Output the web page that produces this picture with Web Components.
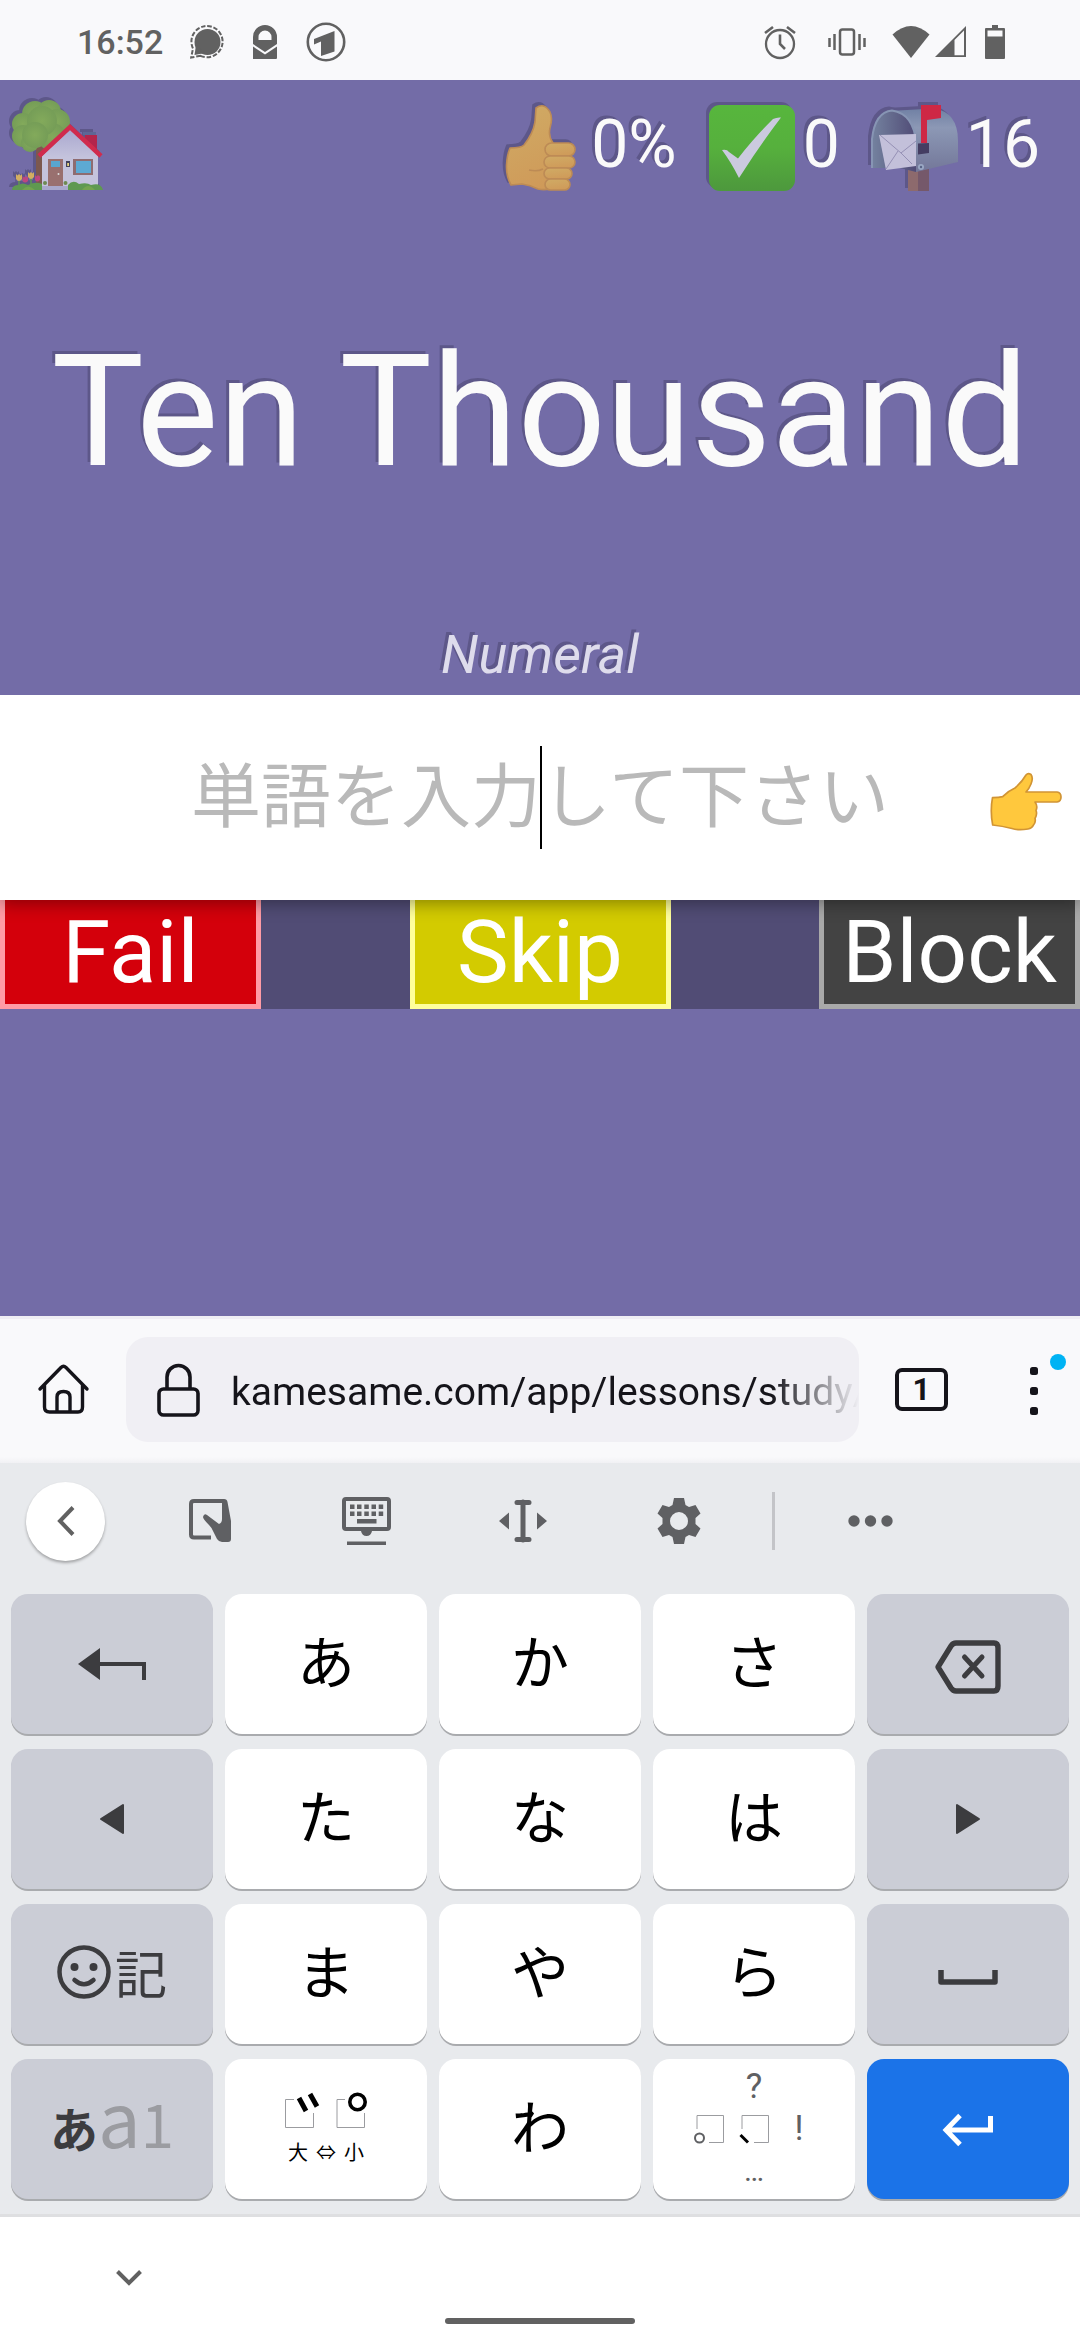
<!DOCTYPE html>
<html lang="en">
<head>
<meta charset="utf-8">
<meta name="viewport" content="width=device-width, initial-scale=1">
<title>KameSame</title>
<style>
  html, body { margin: 0; }
  body {
    min-height: 100vh;
    display: flex;
    flex-direction: column;
    background: #736ca7;
    font-family: Roboto, "Noto Sans CJK JP", sans-serif;
  }
  study-page { flex: 1; }
</style>
</head>
<body>
<status-bar></status-bar>
<study-page>
  <study-header></study-header>
  <study-prompt>Ten Thousand<span slot="kind">Numeral</span></study-prompt>
  <answer-form></answer-form>
  <answer-actions></answer-actions>
</study-page>
<browser-bar></browser-bar>
<kana-keyboard></kana-keyboard>
<nav-bar></nav-bar>

<script>
const define = (tag, html) => {
  const template = document.createElement('template');
  template.innerHTML = html;
  customElements.define(tag, class extends HTMLElement {
    constructor() {
      super();
      this.attachShadow({ mode: 'open' }).append(template.content.cloneNode(true));
    }
  });
};

// name: [width, height, markup]
const ICONS = {
  bubble: [34, 34, '<circle cx="17.500" cy="17" r="13" fill="#616161"/><path d="M6 20 4.500 30 15 28Z" fill="#616161"/><path d="M10.500 30.800A15.600 15.600 0 1 0 3 23.500L1.200 32.500Z" fill="none" stroke="#616161" stroke-width="2" stroke-dasharray="4.500 1.800"/>'],
  mailLock: [28, 34, '<path fill="#616161" fill-rule="evenodd" d="M2 34V21.500L14 29.500 26 21.500V33Q26 34 25 34ZM2 19V12A12 12 0 0 1 26 12V19L14 27ZM7.500 15H20.500V12A6.500 6.500 0 0 0 7.500 12Z"/>'],
  broadcast: [40, 40, '<circle cx="20" cy="20" r="18.200" fill="none" stroke="#616161" stroke-width="2.600"/><path fill="#616161" d="M8 17 28.500 9V29.500L15 34V19.500L8 22.500Z"/>'],
  alarm: [32, 34, '<g fill="none" stroke="#616161" stroke-width="2.300"><circle cx="16" cy="19" r="14"/><path d="M16 9.500V19L21 24M1 8 9 2M23 2 31 8" stroke-width="2.600"/></g>'],
  vibrate: [38, 28, '<g fill="none" stroke="#616161" stroke-width="2.500"><rect x="12" y="1.500" width="14" height="25" rx="2.500"/><path d="M1.500 10V19M6.500 6V22M31.500 6V22M36.500 10V19"/></g>'],
  wifi: [38, 34, '<path fill="#616161" d="M.500 9.500Q19-7.500 37.500 9.500L19 33Z"/>'],
  cell: [31, 34, '<path fill="#616161" fill-rule="evenodd" d="M0 32 31 1V32ZM19.500 30.200H29V5.500L19.500 15Z"/>'],
  battery: [20, 34, '<path fill="#616161" fill-rule="evenodd" d="M1 3H7V0H13V3H19Q20 3 20 4V33Q20 34 19 34H1Q0 34 0 33V4Q0 3 1 3ZM2.500 5.500V11.500H17.500V5.500Z"/>'],
  house: [92, 92, `<defs><radialGradient id="leaf"><stop offset="0" stop-color="#83aa5b"/><stop offset="1" stop-color="#759d57"/></radialGradient><linearGradient id="wall" x2="0" y2="1"><stop offset="0" stop-color="#a9a7cf"/><stop offset=".5" stop-color="#c4c3dc"/></linearGradient></defs>
    <path d="M25 44H36V87H25Z" fill="#7c584f"/>
    <g fill="url(#leaf)"><circle cx="24" cy="15" r="13"/><circle cx="38" cy="13" r="12"/><circle cx="46" cy="23" r="13"/><circle cx="12" cy="25" r="11"/><circle cx="12" cy="37" r="11"/><circle cx="19" cy="44" r="9"/><circle cx="41" cy="38" r="14"/><circle cx="31" cy="22" r="15"/><circle cx="24" cy="36" r="13"/></g>
    <path d="M74 36H86V55L74 45Z" fill="#b3254c"/><path d="M72 33H85V36H72Z" fill="#5e6695"/>
    <path d="M31 57 59 30 87 56V87H31Z" fill="url(#wall)"/><path d="M28 57 59 28 90 57" fill="none" stroke="#d02b4d" stroke-width="4.500"/>
    <path d="M37 60H52V87H37Z" fill="#99706f"/><path d="M40 62H49V68H40Z" fill="#59a6d0"/><circle cx="47.500" cy="75" r="1" fill="#ddd"/>
    <path d="M62 60H82V76H62Z" fill="#8f6c70"/><path d="M65 62H80V74H65Z" fill="#5da9d3"/>
    <path d="M55 62H59V68H55Z" fill="#43415a"/><path d="M56.200 64H58V67H56.200Z" fill="#e7d37e"/>
    <path d="M30 87H59V91H30Z" fill="#a9a8cc"/>
    <g fill="#5f9950"><path d="M1 91Q1 86 8 86 11 83 17 86 25 82 31 85V91Z"/><path d="M57 91V86Q62 80 68 85 76 83 80 86 90 83 92 91Z"/></g><path d="M11 91Q17 84 24 91ZM71 91Q77 83 84 91Z" fill="#74a44f"/>
    <path d="M8 80V87M20 78V86" stroke="#5f9950" stroke-width="1.500"/><g fill="#d3ae61"><path d="M5 75 6.500 76.500 8 75 9.500 76.500 11 75V80Q8 84 5 80Z"/><path d="M17 73 18.500 74.500 20 73 21.500 74.500 23 73V78Q20 82 17 78Z"/></g><g fill="#bd477f"><path d="M11.500 77 13 78.500 14.500 77 16 78.500 17 77V82Q14 85 11.500 82Z"/><path d="M24 76 25.500 77.500 27 76 28.500 77.500 29 76V81Q26 84 24 81Z"/></g>
    <circle cx="34" cy="84" r="2" fill="#6e8a52"/><circle cx="54.500" cy="84" r="2" fill="#6e8a52"/>`],
  thumb: [86, 86, `<defs><linearGradient id="skin" x1=".3" x2=".6" y2="1"><stop offset="0" stop-color="#d0aa64"/><stop offset="1" stop-color="#cf9a59"/></linearGradient></defs><g fill="url(#skin)" stroke="#bd8b55" stroke-width="1.600" stroke-linejoin="round"><path d="M39 3Q47-3 53 7 56 13 53 23 51 31 56 38L58 82Q50 86 41 84 33 80 25 79L14 80Q9 71 9.500 60 10 50 13 43 24 43 27 40 36 29 38 17Z"/><rect x="48" y="38" width="30" height="13" rx="6.500"/><rect x="47" y="51" width="31" height="12" rx="6"/><rect x="47" y="63" width="28" height="11" rx="5.500"/><rect x="48" y="74" width="25" height="11" rx="5.500"/></g><path d="M32 65Q40 67 46 64" fill="none" stroke="#bd8b55" stroke-width="1.400"/>`],
  check: [86, 86, `<defs><linearGradient id="green" x2="0" y2="1"><stop offset="0" stop-color="#57b63d"/><stop offset=".5" stop-color="#56b03d"/><stop offset="1" stop-color="#4d983d"/></linearGradient></defs><rect width="86" height="86" rx="11" fill="url(#green)"/><path fill="#cbcadf" d="M13 45Q18 44 20 47L29 53.500Q44 34 64 14 68 12 72 12.500 51 40 30 73 22 57 13 45Z"/>`],
  mailbox: [86, 86, `<defs><linearGradient id="side" x2="0" y2="1"><stop offset="0" stop-color="#7080a4"/><stop offset=".3" stop-color="#8c98b5"/><stop offset="1" stop-color="#737799"/></linearGradient><linearGradient id="inside"><stop offset="0" stop-color="#74829f"/><stop offset="1" stop-color="#504b76"/></linearGradient></defs>
    <path d="M36 60H57V86H36Z" fill="#8d6a6d"/><path d="M46 60H57V86H46Z" fill="#75586a"/>
    <path d="M17 6 62 3.500Q86 7 86 36V57L44 67Z" fill="url(#side)"/>
    <path d="M0 63V34Q3 7 20 5.500 42 9 44 38V67L28 63Z" fill="url(#inside)"/><path d="M0 63V34Q3 7 20 5.500 42 9 44 38" fill="none" stroke="#8795b4" stroke-width="2"/>
    <path d="M7 30 44 29V61L14 65Z" fill="#c3c0da"/><path d="M8 30 29 48 44 36M14 64 26 46M29 48 40 59" fill="none" stroke="#9590b5" stroke-width="1"/>
    <path d="M49 0H69V13L55 15V38H49Z" fill="#ce2845"/><path d="M46 38.500 57 38V48L46 49.500Z" fill="#443d62"/><circle cx="49" cy="62" r="3" fill="#9aa8c4"/><circle cx="49" cy="62" r="1.200" fill="#596486"/>`],
  point: [72, 60, '<path fill="#ffc83d" stroke="#d19434" stroke-width="1.700" stroke-linejoin="round" d="M2.500 25.700Q9 25.500 12.700 24.700 18 19 25 16 32 10 36 3 38 .500 41 2.500 43.500 6 41 12 39 17 36 20H67Q71 20.500 71 25 71 29.500 67 30H45Q48 34 46 38.500 47.500 42 45 46.500 46 50 43.500 53 42 56.500 38 57 28 58.500 22 56.500 12 54 2.700 53 0 39 2.500 25.700Z"/>'],
  home: [51, 51, '<g fill="none" stroke="#15141a" stroke-width="3.400" stroke-linecap="round" stroke-linejoin="round"><path d="M2 26 23 4.500Q25.500 2 28 4.500L49 26M6.500 22V44Q6.500 49 11.500 49H40Q44.500 49 44.500 44V22M19 49V34Q19 28.500 25.500 28.500T32 34V49"/></g>'],
  lock: [43, 54, '<g fill="none" stroke="#15141a" stroke-width="3.600"><rect x="2" y="26" width="39" height="26" rx="4.500"/><path d="M10 26V14A11.500 11.500 0 0 1 33 14V26"/></g>'],
  menu: [8, 48, '<g fill="#15141a"><rect width="8" height="8" rx="2.500"/><rect y="20" width="8" height="8" rx="2.500"/><rect y="40" width="8" height="8" rx="2.500"/></g>'],
  back: [18, 30, '<path d="M16 1.500 3 15 16 28.500" fill="none" stroke="#616161" stroke-width="4"/>'],
  resize: [42, 44, '<path d="M22 38.500H5Q2 38.500 2 35.500V5Q2 2 5 2H34" fill="none" stroke="#5f6063" stroke-width="4"/><path fill="#5f6063" d="M33 0H35Q38 0 38.500 3L42 22V40Q42 43 39 43H33Q30 43 28 40L24 32Q23 29 20 26 14 20 14 18 15 14 18 16L30 25Q33 24 33 20Z"/>'],
  keyboard: [49, 48, '<g fill="#5f6063"><path fill-rule="evenodd" d="M4 0H45Q49 0 49 4V30Q49 34 45 34H30Q29 39 24.500 39T19 34H4Q0 34 0 30V4Q0 0 4 0ZM4 4V30H45V4Z"/><path d="M8 7.500h4.500v4.500h-4.500zM15 7.500h4.500v4.500h-4.500zM22.300 7.500h4.500v4.500h-4.500zM29.500 7.500h4.500v4.500h-4.500zM36.700 7.500h4.500v4.500h-4.500zM8 14.500h4.500v4.500h-4.500zM15 14.500h4.500v4.500h-4.500zM22.300 14.500h4.500v4.500h-4.500zM29.500 14.500h4.500v4.500h-4.500zM36.700 14.500h4.500v4.500h-4.500zM15 22H34.500V26.500H15ZM5 44.500H44V48H5Z"/></g>'],
  cursor: [48, 42, '<path d="M18 2.500H30M18 39.500H30M24 2V40" fill="none" stroke="#5f6063" stroke-width="5" stroke-linecap="round"/><path fill="#5f6063" d="M0 21 10 12.500V29.500ZM48 21 38 12.500V29.500Z"/>'],
  gear: [44, 46, '<path fill="#5f6063" fill-rule="evenodd" d="M17 0H27L28.500 7 32 9 38.500 7 43.500 15.500 38.500 20V26L43.500 30.500 38.500 39 32 37 28.500 39 27 46H17L15.500 39 12 37 5.500 39 .500 30.500 5.500 26V20L.500 15.500 5.500 7 12 9 15.500 7ZM22 14A9 9 0 1 0 22 32 9 9 0 1 0 22 14Z"/>'],
  more: [45, 12, '<g fill="#5f6063"><circle cx="6" cy="6" r="5.700"/><circle cx="22.500" cy="6" r="5.700"/><circle cx="39" cy="6" r="5.700"/></g>'],
  undo: [68, 32, '<path fill="#3c3c3f" d="M0 16 22 0V14H68V32H64V18H22V32Z"/>'],
  left: [24, 32, '<path fill="#3c3c3f" stroke="#3c3c3f" stroke-width="2" stroke-linejoin="round" d="M1 16 23 2V30Z"/>'],
  right: [24, 32, '<path fill="#3c3c3f" stroke="#3c3c3f" stroke-width="2" stroke-linejoin="round" d="M23 16 1 2V30Z"/>'],
  backspace: [68, 60, '<g transform="translate(0 6)" fill="none" stroke="#3c3c3f" stroke-width="5.400" stroke-linejoin="round" stroke-linecap="round"><path d="M4 27 17 6Q19 3 22 3H60Q64 3 64 8V46Q64 51 60 51H22Q19 51 17 48Z"/><path d="M30.500 17 48 36M48 17 30.500 36" stroke-width="5"/></g>'],
  smile: [54, 54, '<circle cx="27" cy="27" r="24.500" fill="none" stroke="#3c3c3f" stroke-width="4.500"/><circle cx="17.500" cy="22" r="4" fill="#3c3c3f"/><circle cx="36.500" cy="22" r="4" fill="#3c3c3f"/><path d="M17.500 35Q27 43.500 36.500 35" fill="none" stroke="#3c3c3f" stroke-width="4.500" stroke-linecap="round"/>'],
  space: [60, 22, '<path d="M3 7V19H57V7" fill="none" stroke="#3c3c3f" stroke-width="5.500" stroke-linejoin="round"/>'],
  enter: [52, 32, '<path d="M48.500 3V17H4M18 2.500 4 17 18 31.500" fill="none" stroke="#fff" stroke-width="5"/>'],
  marks: [82, 36, '<path d="M9 7.500H.500V35.500H28.500V21M60 7.500H52V35.500H79.500V21" fill="none" stroke="#9b9ca0" stroke-width="1"/><path d="M14 6 21 19M25 2 32 14.500" stroke="#000" stroke-width="5"/><circle cx="72.500" cy="10" r="7.700" fill="none" stroke="#000" stroke-width="3.600"/>'],
  stop: [30, 30, '<path d="M3 15V1.500H29.500V28.500H15" fill="none" stroke="#9b9ca0" stroke-width="1"/><circle cx="5.500" cy="24" r="4.500" fill="none" stroke="#5f6063" stroke-width="2"/>'],
  comma: [30, 30, '<path d="M3 15V1.500H29.500V28.500H15" fill="none" stroke="#9b9ca0" stroke-width="1"/><path d="M1.500 21 9 28.500" stroke="#000" stroke-width="3"/>'],
  down: [26, 16, '<path d="M1.500 1.500 13 13 24.500 1.500" fill="none" stroke="#616161" stroke-width="4"/>']
};

customElements.define('ui-icon', class extends HTMLElement {
  connectedCallback() {
    if (this.shadowRoot) return;
    const [w, h, art] = ICONS[this.getAttribute('name')];
    this.attachShadow({ mode: 'open' }).innerHTML =
      `<style>:host{display:block;flex:none}svg{display:block;overflow:visible}</style>
       <svg width="${w}" height="${h}" viewBox="0 0 ${w} ${h}" aria-hidden="true">${art}</svg>`;
  }
});

define('status-bar', `<style>
  :host { display: flex; justify-content: space-between; align-items: center; height: 80px; padding: 4px 75px 0 77px; box-sizing: border-box; background: #f9f9fb; color: #616161; }
  div { display: flex; align-items: center; }
  .notes { gap: 27px; font-size: 34px; font-weight: 500; line-height: 40px; }
  .state { gap: 26px; } .modes { gap: 32px; } .power { gap: 19px; } .net { gap: 5px; }
</style>
<div class="notes"><time>16:52</time><ui-icon name="bubble"></ui-icon><ui-icon name="mailLock"></ui-icon><ui-icon name="broadcast"></ui-icon></div>
<div class="state"><div class="modes"><ui-icon name="alarm"></ui-icon><ui-icon name="vibrate"></ui-icon></div>
<div class="power"><div class="net"><ui-icon name="wifi"></ui-icon><ui-icon name="cell"></ui-icon></div><ui-icon name="battery"></ui-icon></div></div>`);

define('study-page', `<style>:host { display: block; background: #736ca7; color: #fafafa; }</style><slot></slot>`);

define('study-stat', `<style>
  :host { display: flex; align-items: center; gap: 8px; font-size: 66px; line-height: 78px; text-shadow: -3px -3px 0 #5d5789; }
  slot[name=icon]::slotted(*) { filter: drop-shadow(-3px -3px 0 #5d5789); margin-top: 5px; }
</style><slot name="icon"></slot><slot></slot>`);

define('study-header', `<style>
  :host { display: flex; justify-content: space-between; align-items: center; height: 130px; padding: 0 40px 0 11px; box-sizing: border-box; }
  a { filter: drop-shadow(-3px -3px 0 #5d5789); }
  div { display: flex; gap: 32px; }
</style>
<a href="#home" aria-label="Home"><ui-icon name="house"></ui-icon></a>
<div><study-stat><ui-icon slot="icon" name="thumb"></ui-icon>0%</study-stat>
<study-stat><ui-icon slot="icon" name="check"></ui-icon>0</study-stat>
<study-stat><ui-icon slot="icon" name="mailbox"></ui-icon>16</study-stat></div>`);

define('study-prompt', `<style>
  :host { display: flex; flex-direction: column; align-items: center; gap: 119px; padding: 110px 0 8px; text-shadow: -3px -3px 0 #5d5789; }
  h1 { margin: 0; font-size: 155px; font-weight: 400; line-height: 184px; white-space: nowrap; }
  p { margin: 0; font-size: 54px; font-style: italic; line-height: 64px; color: #dedcec; }
</style><h1><slot></slot></h1><p><slot name="kind"></slot></p>`);

define('answer-form', `<style>
  :host { display: block; position: relative; z-index: 1; background: #fff; box-shadow: 0 4px 16px rgba(0,0,0,.35); clip-path: inset(0 0 -30px 0); }
  form { display: flex; align-items: center; height: 205px; padding-left: 108px; }
  label { flex: 1; position: relative; display: block; }
  input { display: block; width: 100%; box-sizing: border-box; border: 0; padding: 0; outline: 0; background: none; height: 104px; font-family: Roboto, "Noto Sans CJK JP", sans-serif; font-size: 70px; line-height: 104px; text-align: center; color: #000; }
  input::placeholder { color: #b9b9b9; opacity: 1; }
  i { position: absolute; left: 50%; top: 0; width: 2px; height: 103px; background: #000; }
  button { width: 108px; border: 0; padding: 8px 0 0; background: none; display: flex; justify-content: center; align-items: center; }
</style>
<form><label><input type="text" lang="ja" aria-label="Answer" placeholder="単語を入力して下さい"><i></i></label>
<button type="button" aria-label="Submit"><ui-icon name="point"></ui-icon></button></form>`);

define('answer-actions', `<style>
  :host { display: flex; justify-content: space-between; background: #514c75; }
  button { width: 261px; box-sizing: border-box; margin: 0; padding: 0; border: 5px solid; border-top: 0; color: #fff; font: 400 87px/104px Roboto, sans-serif; }
  .fail { background: #d4000b; border-color: #ff9ba5; }
  .skip { background: #d3cb00; border-color: #ffff9b; }
  .block { background: #434343; border-color: #a9a9a9; }
</style>
<button class="fail" type="button">Fail</button><button class="skip" type="button">Skip</button><button class="block" type="button">Block</button>`);

define('browser-bar', `<style>
  :host { display: grid; grid-template-columns: 126fr 733fr 125fr 96fr; align-items: center; border-top: 3px solid #efeef4; background: linear-gradient(#f9f9fb 138px, #f1f1f4); height: 144px; }
  button { border: 0; padding: 0; background: none; display: grid; place-items: center; justify-self: center; color: #15141a; }
  .home { margin-bottom: 5px; }
  .url { display: flex; align-items: center; gap: 31px; height: 105px; margin-bottom: 3px; padding-left: 31px; border-radius: 22px; background: #f0eff4; overflow: hidden; }
  .url input { flex: 1; min-width: 0; border: 0; padding: 4px 0 0; outline: 0; background: none; color: #15141a; font: 400 39px/56px Roboto, sans-serif; -webkit-mask-image: linear-gradient(90deg, #000 86%, transparent); mask-image: linear-gradient(90deg, #000 86%, transparent); }
  .tabs { width: 53px; height: 43px; box-sizing: border-box; border: 4px solid #15141a; border-radius: 7px; font: 700 31px/36px Roboto, sans-serif; margin-bottom: 3px; }
  .menu { position: relative; width: 60px; height: 74px; margin-left: 4px; }
  .menu i { position: absolute; right: -2px; top: 0; width: 16px; height: 16px; border-radius: 50%; background: #00b3f4; }
</style>
<button class="home" type="button" aria-label="Home"><ui-icon name="home"></ui-icon></button>
<div class="url"><ui-icon name="lock"></ui-icon><input type="text" readonly aria-label="Address" value="kamesame.com/app/lessons/study/"></div>
<button class="tabs" type="button" aria-label="Tabs">1</button>
<button class="menu" type="button" aria-label="Menu"><ui-icon name="menu"></ui-icon><i></i></button>`);

define('keyboard-toolbar', `<style>
  :host { display: grid; grid-template-columns: 131fr 157fr 156fr 157fr 156fr 32fr 163fr 128fr; align-items: center; height: 116px; }
  button { border: 0; padding: 0; background: none; display: grid; place-items: center; justify-self: center; height: 80px; min-width: 79px; }
  .back { height: 79px; border-radius: 50%; background: #fff; box-shadow: 0 2px 3px rgba(0,0,0,.3); }
  hr { margin: 0; border: 0; width: 3px; height: 58px; background: #c3c4c8; justify-self: center; }
</style>
<button class="back" type="button" aria-label="Back"><ui-icon name="back"></ui-icon></button>
<button type="button" aria-label="Resize"><ui-icon name="resize"></ui-icon></button>
<button type="button" aria-label="Layout"><ui-icon name="keyboard"></ui-icon></button>
<button type="button" aria-label="Edit text"><ui-icon name="cursor"></ui-icon></button>
<button type="button" aria-label="Settings"><ui-icon name="gear"></ui-icon></button>
<hr><button type="button" aria-label="More"><ui-icon name="more"></ui-icon></button>`);

define('kana-key', `<style>
  :host { display: block; }
  button { display: flex; align-items: center; justify-content: center; box-sizing: border-box; width: 100%; height: 140px; margin: 0; padding: 0; border: 0; border-radius: 17px; background: var(--key, #fff); color: #000; box-shadow: 0 2px 0 #a9abae; font: 400 58px/84px "Noto Sans CJK JP", sans-serif; }
  :host([tone=kana]) button { padding-bottom: 10px; }
  :host([tone=side]) { --key: #cbcdd6; }
  :host([tone=go]) { --key: #1b73e8; }
</style><button type="button" part="button"><slot></slot></button>`);

define('kana-keyboard', `<style>
  :host { display: block; background: #e8eaed; border-bottom: 3px solid #dedfe1; }
  .keys { display: grid; grid-template-columns: repeat(5, 1fr); gap: 15px 12px; padding: 15px 11px; }
  .row { display: flex; align-items: center; }
  .signs { gap: 4px; padding-bottom: 4px; color: #3c3c3f; font-size: 52px; font-weight: 400; }
  .modes { align-items: baseline; padding-bottom: 16px; color: #3c3c3f; font-size: 48px; font-weight: 700; line-height: 64px; }
  .modes .a, .modes .n { color: #9b9ca1; font-weight: 400; }
  .modes .a { font-size: 76px; } .modes .n { font-size: 60px; }
  .voice { display: grid; justify-items: center; gap: 10px; }
  .size { display: flex; gap: 8px; font-size: 20px; line-height: 28px; }
  .size span { width: 20px; text-align: center; }
  .punct { display: grid; grid-template-columns: repeat(3, 45px); grid-template-rows: 40px 44px 40px; place-items: center; color: #5f6063; font-family: Roboto, sans-serif; font-size: 35px; line-height: 40px; }
  .punct .mid { grid-column: 2; }
  .punct .dots { font-size: 30px; }
</style>
<keyboard-toolbar></keyboard-toolbar>
<div class="keys">
  <kana-key tone="side"><ui-icon name="undo"></ui-icon></kana-key><kana-key tone="kana">あ</kana-key><kana-key tone="kana">か</kana-key><kana-key tone="kana">さ</kana-key><kana-key tone="side"><ui-icon name="backspace"></ui-icon></kana-key>
  <kana-key tone="side"><ui-icon name="left"></ui-icon></kana-key><kana-key tone="kana">た</kana-key><kana-key tone="kana">な</kana-key><kana-key tone="kana">は</kana-key><kana-key tone="side"><ui-icon name="right"></ui-icon></kana-key>
  <kana-key tone="side"><span class="row signs"><ui-icon name="smile"></ui-icon>記</span></kana-key><kana-key tone="kana">ま</kana-key><kana-key tone="kana">や</kana-key><kana-key tone="kana">ら</kana-key><kana-key tone="side"><ui-icon name="space"></ui-icon></kana-key>
  <kana-key tone="side"><span class="row modes">あ<span><span class="a">a</span><span class="n">1</span></span></span></kana-key>
  <kana-key><span class="voice"><ui-icon name="marks"></ui-icon><span class="size"><span>大</span><span>⇔</span><span>小</span></span></span></kana-key>
  <kana-key tone="kana">わ</kana-key>
  <kana-key><span class="punct"><span class="mid">?</span><ui-icon name="stop" style="grid-column:1"></ui-icon><ui-icon name="comma"></ui-icon><span>!</span><span class="mid dots">…</span></span></kana-key>
  <kana-key tone="go"><ui-icon name="enter"></ui-icon></kana-key>
</div>`);

define('nav-bar', `<style>
  :host { display: grid; grid-template-columns: 1fr auto 1fr; height: 123px; background: #fff; }
  button { justify-self: start; align-self: center; margin: 0 0 2px 99px; width: 60px; height: 60px; border: 0; padding: 0; background: none; display: grid; place-items: center; }
  i { align-self: end; width: 190px; height: 6px; margin-bottom: 16px; border-radius: 3px; background: #616161; }
</style>
<button type="button" aria-label="Hide keyboard"><ui-icon name="down"></ui-icon></button><i></i>`);
</script>
</body>
</html>
